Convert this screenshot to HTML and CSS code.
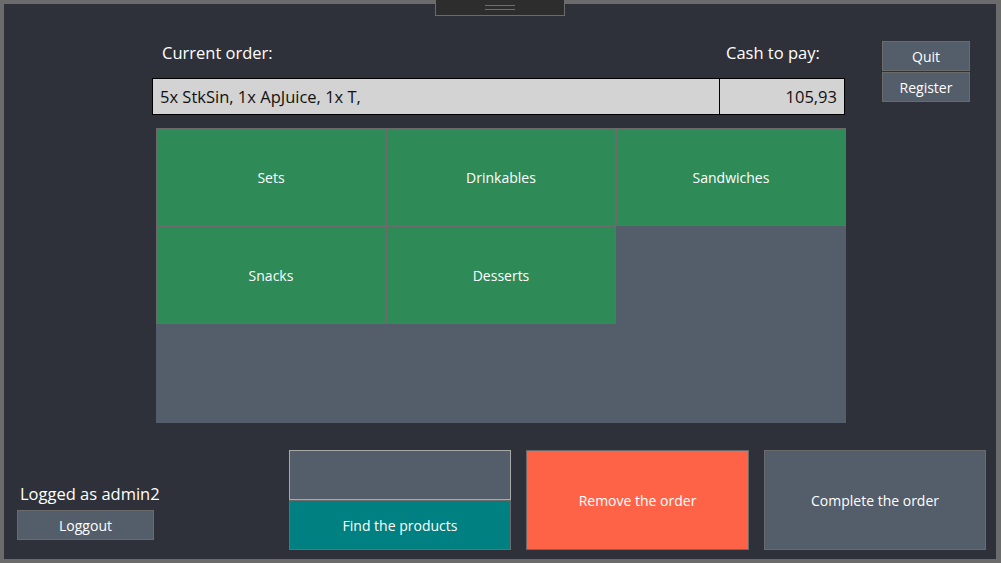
FILE: index.html
```html
<!DOCTYPE html>
<html>
<head>
<meta charset="utf-8">
<link rel="stylesheet" href="styles.css">
</head>
<body>
<div class="window">
  <div class="handle"><span class="grip"></span></div>
  <div class="top">
    <div class="main">
      <div class="header">
        <div class="lbl-order">Current order:</div>
        <div class="lbl-cash">Cash to pay:</div>
      </div>
      <div class="fields">
        <div class="field order">5x StkSin, 1x ApJuice, 1x T,</div>
        <div class="field cash">105,93</div>
      </div>
      <div class="grid">
        <div class="cell">Sets</div>
        <div class="cell">Drinkables</div>
        <div class="cell">Sandwiches</div>
        <div class="cell">Snacks</div>
        <div class="cell">Desserts</div>
      </div>
    </div>
    <div class="side">
      <div class="btn small quit">Quit</div>
      <div class="btn small">Register</div>
    </div>
  </div>
  <div class="bottom">
    <div class="user">
      <div class="logged">Logged as admin2</div>
      <div class="btn logout">Loggout</div>
    </div>
    <div class="find">
      <div class="search"></div>
      <div class="btn teal">Find the products</div>
    </div>
    <div class="btn big tomato">Remove the order</div>
    <div class="btn big slate">Complete the order</div>
  </div>
</div>
</body>
</html>
```
FILE: styles.css
```css
html, body { margin: 0; padding: 0; background: #2e3139; }
.window {
  position: relative;
  width: 1001px; height: 563px;
  box-sizing: border-box;
  border: 4px solid #6b6b6b;
  border-right-width: 5px;
  background: #2e3139;
  font-family: "Open Sans", "Noto Sans", sans-serif;
  color: #ffffff;
  display: flex; flex-direction: column;
}
.handle {
  position: absolute; top: -4px; left: 431px;
  width: 130px; height: 16px; box-sizing: border-box;
  background: #2d2d2d; border: 1px solid #6b6b6b; border-top: none;
  display: flex; justify-content: center; align-items: flex-start;
}
.grip {
  display: block; margin-top: 5px; width: 30px; height: 3px;
  border-top: 1px solid #6e6e6e; border-bottom: 1px solid #6e6e6e;
}
.top { display: flex; height: 419px; }
.main { margin-left: 148px; width: 693px; display: flex; flex-direction: column; }
.header { display: flex; padding-top: 38px; height: 22px; margin-bottom: 14px; font-size: 16.5px; line-height: 22px; }
.lbl-order { padding-left: 10px; width: 558px; }
.lbl-cash { padding-left: 6px; }
.fields { display: flex; height: 37px; }
.field {
  box-sizing: border-box; height: 37px; background: #d3d3d3; color: #111;
  border: 1px solid #000; font-size: 16.5px; line-height: 35px;
}
.order { width: 569px; padding-left: 7px; }
.cash { width: 125px; border-left: none; text-align: right; padding-right: 7px; }
.grid {
  margin-top: 13px; margin-left: 4px; width: 690px; height: 295px;
  background: #545d6a;
  display: grid; grid-template-columns: repeat(3, 230px); grid-template-rows: 98px 98px;
}
.cell {
  box-sizing: border-box; background: #2e8b57; border: 1px solid #6b6b6b;
  display: flex; align-items: center; justify-content: center;
  font-size: 14px; padding-top: 1px;
}
.side { margin-left: 37px; margin-top: 37px; display: flex; flex-direction: column; gap: 1px; }
.btn {
  box-sizing: border-box; border: 1px solid #6b6b6b; background: #545d6a;
  display: flex; align-items: center; justify-content: center; font-size: 14px;
}
.small { width: 88px; height: 30px; padding-top: 1px; }
.bottom { display: flex; align-items: flex-end; margin-top: 27px; height: 100px; }
.user { margin-left: 13px; margin-bottom: 10px; width: 137px; display: flex; flex-direction: column; }
.logged { font-size: 16.5px; line-height: 22px; padding-left: 3px; white-space: nowrap; margin-bottom: 5px; }
.logout { height: 30px; }
.find { margin-left: 135px; width: 222px; height: 100px; display: flex; flex-direction: column; }
.search { height: 50px; box-sizing: border-box; background: #545d6a; border: 1px solid #a9a9a9; }
.teal { height: 50px; background: #008080; }
.big { width: 223px; height: 100px; margin-left: 15px; }
.tomato { background: #ff6347; }
.slate { width: 222px; }
```
